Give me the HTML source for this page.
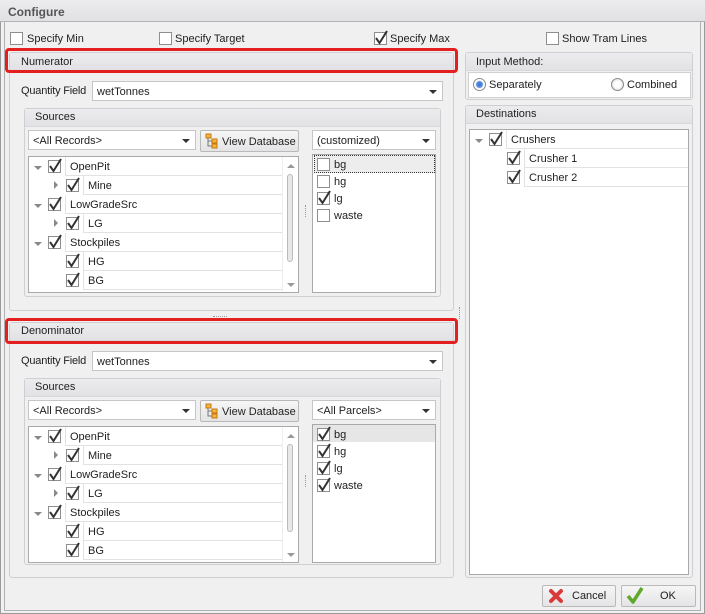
<!DOCTYPE html>
<html><head><meta charset="utf-8"><style>
*{box-sizing:border-box;margin:0;padding:0}
body{width:705px;height:614px;background:#f0f0f0;position:relative;overflow:hidden;font:11px "Liberation Sans",sans-serif;color:#1e1e1e}
.a{position:absolute}
.t{position:absolute;white-space:nowrap;line-height:14px}
.cb{position:absolute;width:13px;height:13px;border:1px solid #8e8e8e;background:#fff}
.cb svg{position:absolute;left:-1px;top:-3px}
.grp{position:absolute;border:1px solid #cfcfd3;border-radius:3px;background:#f0f0f0}
.hdr{position:absolute;left:0;right:0;top:0;height:18px;background:linear-gradient(#ececef,#e2e2e5);border-bottom:1px solid #d8d8dc}
.combo{position:absolute;height:20px;border:1px solid #c6c6c6;background:#fff}
.combo .t{left:4px;top:3px}
.dd{position:absolute;right:5px;top:8px;width:0;height:0;border-left:4px solid transparent;border-right:4px solid transparent;border-top:4px solid #333}
.tree{position:absolute;border:1px solid #a9a9a9;background:#fff;overflow:hidden}
.cell{position:absolute;height:19px;border-left:1px solid #e2e2e2;border-bottom:1px solid #e2e2e2}
.exd{position:absolute;width:0;height:0;border-left:4px solid transparent;border-right:4px solid transparent;border-top:4px solid #888}
.exr{position:absolute;width:0;height:0;border-top:4px solid transparent;border-bottom:4px solid transparent;border-left:4px solid #888}
.btn{position:absolute;border:1px solid #b9b9b9;border-radius:2px;background:linear-gradient(#f6f6f6,#e4e4e6)}
.red{position:absolute;border:3px solid #e3201f;border-radius:4px}
.dots{position:absolute;border-left:1px dotted #999}
.hdots{position:absolute;border-top:1px dotted #999}
</style></head><body>
<div class="a" style="left:0;top:0;width:705px;height:614px;border:1px solid #9a9a9a;border-top:none"></div>
<div class="a" style="left:0;top:0;width:705px;height:22px;background:linear-gradient(#ececee,#e1e1e4);border-bottom:1px solid #b4b4b8"></div>
<div class="t" style="left:8px;top:5px;font-weight:bold;color:#555;font-size:12px">Configure</div>
<div class="a" style="left:4px;top:22px;width:697px;height:589px;border:1px solid #b0b0b4;border-top:none"></div>

<div class="cb" style="left:10px;top:32px"></div><div class="t" style="left:27px;top:32px">Specify Min</div>
<div class="cb" style="left:159px;top:32px"></div><div class="t" style="left:175px;top:32px">Specify Target</div>
<div class="cb" style="left:374px;top:32px"><svg width="16" height="16"><path d="M2 8 L5.5 13 L13 1" stroke="#333" stroke-width="2" fill="none"/></svg></div><div class="t" style="left:390px;top:32px">Specify Max</div>
<div class="cb" style="left:546px;top:32px"></div><div class="t" style="left:562px;top:32px">Show Tram Lines</div>

<!-- NUMERATOR -->
<div class="grp" style="left:9px;top:52px;width:445px;height:259px"><div class="hdr"></div></div>
<div class="red" style="left:5px;top:48px;width:453px;height:25px"></div>
<div class="t" style="left:21px;top:55px">Numerator</div>
<div class="t" style="left:21px;top:84px;letter-spacing:-0.2px">Quantity Field</div>
<div class="combo" style="left:92px;top:81px;width:351px"><div class="t">wetTonnes</div><div class="dd"></div></div>
<div class="grp" style="left:24px;top:108px;width:417px;height:189px"><div class="hdr"></div></div>
<div class="t" style="left:35px;top:110px">Sources</div>
<div class="combo" style="left:28px;top:130px;width:168px"><div class="t">&lt;All Records&gt;</div><div class="dd"></div></div>
<div class="btn" style="left:200px;top:130px;width:99px;height:22px"></div>
<svg class="a" style="left:205px;top:133px" width="14" height="16"><rect x="1" y="1" width="5" height="4" fill="#f6b23a" stroke="#c47a10"/><rect x="7" y="6" width="5" height="4" fill="#f6b23a" stroke="#c47a10"/><rect x="7" y="11" width="5" height="4" fill="#f6b23a" stroke="#c47a10"/><path d="M3 5 V13 H7 M3 8 H7" stroke="#777" fill="none"/></svg>
<div class="t" style="left:222px;top:135px">View Database</div>
<div class="combo" style="left:312px;top:130px;width:124px"><div class="t">(customized)</div><div class="dd"></div></div>

<div class="tree" style="left:28px;top:156px;width:271px;height:137px">
 <div class="exd" style="left:5px;top:9px"></div><div class="cb" style="left:19px;top:3px"><svg width="16" height="16"><path d="M2 8 L5.5 13 L13 1" stroke="#333" stroke-width="2" fill="none"/></svg></div><div class="cell" style="left:36px;top:0;width:217px"></div><div class="t" style="left:41px;top:3px">OpenPit</div>
 <div class="exr" style="left:25px;top:24px"></div><div class="cb" style="left:37px;top:22px"><svg width="16" height="16"><path d="M2 8 L5.5 13 L13 1" stroke="#333" stroke-width="2" fill="none"/></svg></div><div class="cell" style="left:54px;top:19px;width:199px"></div><div class="t" style="left:59px;top:22px">Mine</div>
 <div class="exd" style="left:5px;top:47px"></div><div class="cb" style="left:19px;top:41px"><svg width="16" height="16"><path d="M2 8 L5.5 13 L13 1" stroke="#333" stroke-width="2" fill="none"/></svg></div><div class="cell" style="left:36px;top:38px;width:217px"></div><div class="t" style="left:41px;top:41px">LowGradeSrc</div>
 <div class="exr" style="left:25px;top:62px"></div><div class="cb" style="left:37px;top:60px"><svg width="16" height="16"><path d="M2 8 L5.5 13 L13 1" stroke="#333" stroke-width="2" fill="none"/></svg></div><div class="cell" style="left:54px;top:57px;width:199px"></div><div class="t" style="left:59px;top:60px">LG</div>
 <div class="exd" style="left:5px;top:85px"></div><div class="cb" style="left:19px;top:79px"><svg width="16" height="16"><path d="M2 8 L5.5 13 L13 1" stroke="#333" stroke-width="2" fill="none"/></svg></div><div class="cell" style="left:36px;top:76px;width:217px"></div><div class="t" style="left:41px;top:79px">Stockpiles</div>
 <div class="cb" style="left:37px;top:98px"><svg width="16" height="16"><path d="M2 8 L5.5 13 L13 1" stroke="#333" stroke-width="2" fill="none"/></svg></div><div class="cell" style="left:54px;top:95px;width:199px"></div><div class="t" style="left:59px;top:98px">HG</div>
 <div class="cb" style="left:37px;top:117px"><svg width="16" height="16"><path d="M2 8 L5.5 13 L13 1" stroke="#333" stroke-width="2" fill="none"/></svg></div><div class="cell" style="left:54px;top:114px;width:199px"></div><div class="t" style="left:59px;top:117px">BG</div>
 <div class="a" style="left:253px;top:0;width:17px;height:137px;background:#fff;border-left:1px solid #eee"></div>
 <div class="a" style="left:258px;top:7px;border-left:4px solid transparent;border-right:4px solid transparent;border-bottom:4px solid #999"></div>
 <div class="a" style="left:258px;top:17px;width:6px;height:88px;border:1px solid #bbb;border-radius:3px;background:#e8e8e8"></div>
 <div class="a" style="left:258px;top:126px;border-left:4px solid transparent;border-right:4px solid transparent;border-top:4px solid #999"></div>
</div>
<div class="dots" style="left:305px;top:205px;width:2px;height:12px"></div>
<div class="tree" style="left:312px;top:154px;width:124px;height:139px">
 <div class="a" style="left:1px;top:0;width:121px;height:18px;background:#ededed;border:1px dotted #333"></div>
 <div class="cb" style="left:4px;top:3px"></div><div class="t" style="left:21px;top:3px">bg</div>
 <div class="cb" style="left:4px;top:20px"></div><div class="t" style="left:21px;top:20px">hg</div>
 <div class="cb" style="left:4px;top:37px"><svg width="16" height="16"><path d="M2 8 L5.5 13 L13 1" stroke="#333" stroke-width="2" fill="none"/></svg></div><div class="t" style="left:21px;top:37px">lg</div>
 <div class="cb" style="left:4px;top:54px"></div><div class="t" style="left:21px;top:54px">waste</div>
</div>

<div class="hdots" style="left:213px;top:316px;width:14px;height:2px"></div>
<div class="dots" style="left:459px;top:307px;width:2px;height:12px"></div>

<!-- DENOMINATOR -->
<div class="grp" style="left:9px;top:322px;width:445px;height:256px"><div class="hdr"></div></div>
<div class="red" style="left:5px;top:318px;width:453px;height:26px"></div>
<div class="t" style="left:21px;top:324px">Denominator</div>
<div class="t" style="left:21px;top:354px;letter-spacing:-0.2px">Quantity Field</div>
<div class="combo" style="left:92px;top:351px;width:351px"><div class="t">wetTonnes</div><div class="dd"></div></div>
<div class="grp" style="left:24px;top:378px;width:417px;height:187px"><div class="hdr"></div></div>
<div class="t" style="left:35px;top:380px">Sources</div>
<div class="combo" style="left:28px;top:400px;width:168px"><div class="t">&lt;All Records&gt;</div><div class="dd"></div></div>
<div class="btn" style="left:200px;top:400px;width:99px;height:22px"></div>
<svg class="a" style="left:205px;top:403px" width="14" height="16"><rect x="1" y="1" width="5" height="4" fill="#f6b23a" stroke="#c47a10"/><rect x="7" y="6" width="5" height="4" fill="#f6b23a" stroke="#c47a10"/><rect x="7" y="11" width="5" height="4" fill="#f6b23a" stroke="#c47a10"/><path d="M3 5 V13 H7 M3 8 H7" stroke="#777" fill="none"/></svg>
<div class="t" style="left:222px;top:405px">View Database</div>
<div class="combo" style="left:312px;top:400px;width:124px"><div class="t">&lt;All Parcels&gt;</div><div class="dd"></div></div>

<div class="tree" style="left:28px;top:426px;width:271px;height:137px">
 <div class="exd" style="left:5px;top:9px"></div><div class="cb" style="left:19px;top:3px"><svg width="16" height="16"><path d="M2 8 L5.5 13 L13 1" stroke="#333" stroke-width="2" fill="none"/></svg></div><div class="cell" style="left:36px;top:0;width:217px"></div><div class="t" style="left:41px;top:3px">OpenPit</div>
 <div class="exr" style="left:25px;top:24px"></div><div class="cb" style="left:37px;top:22px"><svg width="16" height="16"><path d="M2 8 L5.5 13 L13 1" stroke="#333" stroke-width="2" fill="none"/></svg></div><div class="cell" style="left:54px;top:19px;width:199px"></div><div class="t" style="left:59px;top:22px">Mine</div>
 <div class="exd" style="left:5px;top:47px"></div><div class="cb" style="left:19px;top:41px"><svg width="16" height="16"><path d="M2 8 L5.5 13 L13 1" stroke="#333" stroke-width="2" fill="none"/></svg></div><div class="cell" style="left:36px;top:38px;width:217px"></div><div class="t" style="left:41px;top:41px">LowGradeSrc</div>
 <div class="exr" style="left:25px;top:62px"></div><div class="cb" style="left:37px;top:60px"><svg width="16" height="16"><path d="M2 8 L5.5 13 L13 1" stroke="#333" stroke-width="2" fill="none"/></svg></div><div class="cell" style="left:54px;top:57px;width:199px"></div><div class="t" style="left:59px;top:60px">LG</div>
 <div class="exd" style="left:5px;top:85px"></div><div class="cb" style="left:19px;top:79px"><svg width="16" height="16"><path d="M2 8 L5.5 13 L13 1" stroke="#333" stroke-width="2" fill="none"/></svg></div><div class="cell" style="left:36px;top:76px;width:217px"></div><div class="t" style="left:41px;top:79px">Stockpiles</div>
 <div class="cb" style="left:37px;top:98px"><svg width="16" height="16"><path d="M2 8 L5.5 13 L13 1" stroke="#333" stroke-width="2" fill="none"/></svg></div><div class="cell" style="left:54px;top:95px;width:199px"></div><div class="t" style="left:59px;top:98px">HG</div>
 <div class="cb" style="left:37px;top:117px"><svg width="16" height="16"><path d="M2 8 L5.5 13 L13 1" stroke="#333" stroke-width="2" fill="none"/></svg></div><div class="cell" style="left:54px;top:114px;width:199px"></div><div class="t" style="left:59px;top:117px">BG</div>
 <div class="a" style="left:253px;top:0;width:17px;height:137px;background:#fff;border-left:1px solid #eee"></div>
 <div class="a" style="left:258px;top:7px;border-left:4px solid transparent;border-right:4px solid transparent;border-bottom:4px solid #999"></div>
 <div class="a" style="left:258px;top:17px;width:6px;height:88px;border:1px solid #bbb;border-radius:3px;background:#e8e8e8"></div>
 <div class="a" style="left:258px;top:126px;border-left:4px solid transparent;border-right:4px solid transparent;border-top:4px solid #999"></div>
</div>
<div class="dots" style="left:305px;top:475px;width:2px;height:12px"></div>
<div class="tree" style="left:312px;top:424px;width:124px;height:139px">
 <div class="a" style="left:0;top:0;width:122px;height:17px;background:#e6e6e6"></div>
 <div class="cb" style="left:4px;top:3px"><svg width="16" height="16"><path d="M2 8 L5.5 13 L13 1" stroke="#333" stroke-width="2" fill="none"/></svg></div><div class="t" style="left:21px;top:3px">bg</div>
 <div class="cb" style="left:4px;top:20px"><svg width="16" height="16"><path d="M2 8 L5.5 13 L13 1" stroke="#333" stroke-width="2" fill="none"/></svg></div><div class="t" style="left:21px;top:20px">hg</div>
 <div class="cb" style="left:4px;top:37px"><svg width="16" height="16"><path d="M2 8 L5.5 13 L13 1" stroke="#333" stroke-width="2" fill="none"/></svg></div><div class="t" style="left:21px;top:37px">lg</div>
 <div class="cb" style="left:4px;top:54px"><svg width="16" height="16"><path d="M2 8 L5.5 13 L13 1" stroke="#333" stroke-width="2" fill="none"/></svg></div><div class="t" style="left:21px;top:54px">waste</div>
</div>

<!-- RIGHT -->
<div class="grp" style="left:465px;top:52px;width:228px;height:48px"><div class="hdr"></div></div>
<div class="t" style="left:476px;top:55px">Input Method:</div>
<div class="a" style="left:468px;top:72px;width:223px;height:26px;background:#fff;border:1px solid #d0d0d0"></div>
<div class="a" style="left:473px;top:78px;width:13px;height:13px;border-radius:50%;border:1px solid #8a8a8a;background:radial-gradient(circle,#3a70d0 0,#5a8ee0 3px,#fff 4px)"></div>
<div class="t" style="left:489px;top:78px">Separately</div>
<div class="a" style="left:611px;top:78px;width:13px;height:13px;border-radius:50%;border:1px solid #8a8a8a;background:radial-gradient(circle,#fff 3px,#e0e0e0 6px)"></div>
<div class="t" style="left:627px;top:78px">Combined</div>

<div class="grp" style="left:465px;top:105px;width:228px;height:473px"><div class="hdr"></div></div>
<div class="t" style="left:476px;top:107px">Destinations</div>
<div class="tree" style="left:469px;top:129px;width:220px;height:446px">
 <div class="exd" style="left:5px;top:9px"></div><div class="cb" style="left:19px;top:3px"><svg width="16" height="16"><path d="M2 8 L5.5 13 L13 1" stroke="#333" stroke-width="2" fill="none"/></svg></div><div class="cell" style="left:36px;top:0;width:184px"></div><div class="t" style="left:41px;top:3px">Crushers</div>
 <div class="cb" style="left:37px;top:22px"><svg width="16" height="16"><path d="M2 8 L5.5 13 L13 1" stroke="#333" stroke-width="2" fill="none"/></svg></div><div class="cell" style="left:54px;top:19px;width:166px"></div><div class="t" style="left:59px;top:22px">Crusher 1</div>
 <div class="cb" style="left:37px;top:41px"><svg width="16" height="16"><path d="M2 8 L5.5 13 L13 1" stroke="#333" stroke-width="2" fill="none"/></svg></div><div class="cell" style="left:54px;top:38px;width:166px"></div><div class="t" style="left:59px;top:41px">Crusher 2</div>
</div>

<div class="btn" style="left:542px;top:585px;width:74px;height:22px"></div>
<svg class="a" style="left:548px;top:588px" width="16" height="16"><path d="M3 3 L13 13 M13 3 L3 13" stroke="#d83a3a" stroke-width="4" stroke-linecap="round"/></svg>
<div class="t" style="left:572px;top:589px">Cancel</div>
<div class="btn" style="left:621px;top:585px;width:75px;height:22px"></div>
<svg class="a" style="left:626px;top:586px" width="18" height="19"><path d="M2 10 L7 16 L16 2" stroke="#5fa82e" stroke-width="3.5" fill="none" stroke-linejoin="round"/></svg>
<div class="t" style="left:660px;top:589px">OK</div>
</body></html>
